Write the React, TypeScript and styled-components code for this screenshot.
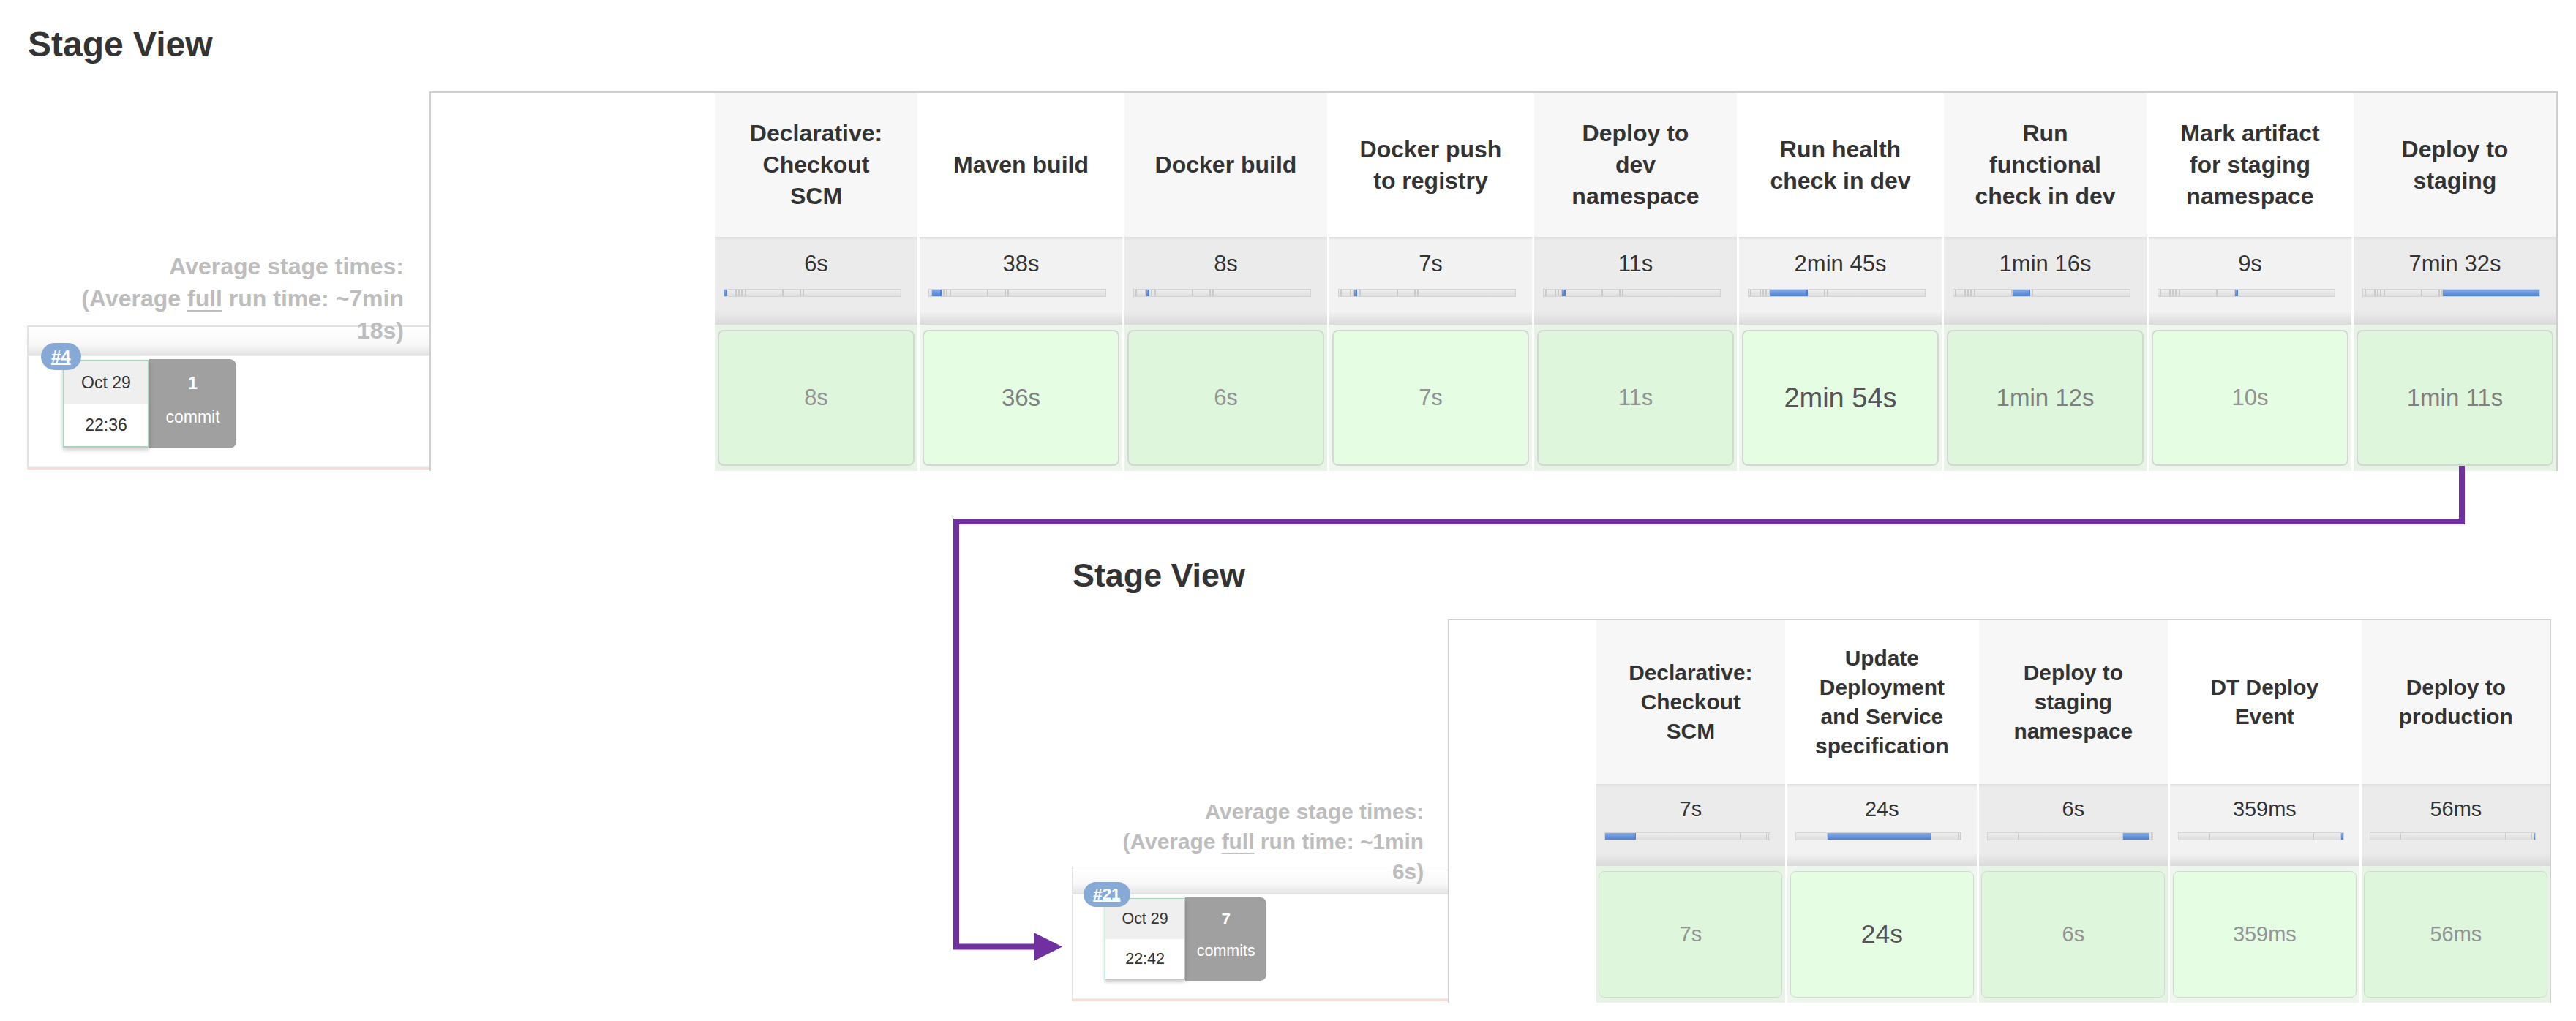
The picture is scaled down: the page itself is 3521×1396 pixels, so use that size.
import styled, { createGlobalStyle, css } from 'styled-components';

const GlobalStyle = createGlobalStyle`
    html, body {
        margin: 0;
        padding: 0;
        background: #fff;
    }
    body {
        font-family: 'Liberation Sans', Arial, Helvetica, sans-serif;
        color: #333;
    }
`;

type Tone = 'light' | 'mid' | 'strong';

interface IStage {
    name: string;
    avg: string;
    avgSec: number;
    run: string;
    tone: Tone;
}

interface IRun {
    id: number;
    date: string;
    time: string;
    commits: number;
    leadWidth: number;
    fullTime: string;
    stages: IStage[];
}

const firstRun: IRun = {
    id: 4,
    date: 'Oct 29',
    time: '22:36',
    commits: 1,
    leadWidth: 385,
    fullTime: '~7min 18s',
    stages: [
        { name: 'Declarative: Checkout SCM', avg: '6s', avgSec: 6, run: '8s', tone: 'light' },
        { name: 'Maven build', avg: '38s', avgSec: 38, run: '36s', tone: 'mid' },
        { name: 'Docker build', avg: '8s', avgSec: 8, run: '6s', tone: 'light' },
        { name: 'Docker push to registry', avg: '7s', avgSec: 7, run: '7s', tone: 'light' },
        { name: 'Deploy to dev namespace', avg: '11s', avgSec: 11, run: '11s', tone: 'light' },
        { name: 'Run health check in dev', avg: '2min 45s', avgSec: 165, run: '2min 54s', tone: 'strong' },
        { name: 'Run functional check in dev', avg: '1min 16s', avgSec: 76, run: '1min 12s', tone: 'mid' },
        { name: 'Mark artifact for staging namespace', avg: '9s', avgSec: 9, run: '10s', tone: 'light' },
        { name: 'Deploy to staging', avg: '7min 32s', avgSec: 452, run: '1min 11s', tone: 'mid' },
    ],
};

const secondRun: IRun = {
    id: 21,
    date: 'Oct 29',
    time: '22:42',
    commits: 7,
    leadWidth: 213,
    fullTime: '~1min 6s',
    stages: [
        { name: 'Declarative: Checkout SCM', avg: '7s', avgSec: 7, run: '7s', tone: 'light' },
        { name: 'Update Deployment and Service specification', avg: '24s', avgSec: 24, run: '24s', tone: 'strong' },
        { name: 'Deploy to staging namespace', avg: '6s', avgSec: 6, run: '6s', tone: 'light' },
        { name: 'DT Deploy Event', avg: '359ms', avgSec: 0.359, run: '359ms', tone: 'light' },
        { name: 'Deploy to production', avg: '56ms', avgSec: 0.056, run: '56ms', tone: 'light' },
    ],
};

const Page = styled.div`
    position: relative;
    width: 3521px;
    height: 1396px;
    overflow: hidden;
    padding-top: 33px;
    box-sizing: border-box;
`;

const Placement = styled.div<{ $left: number; $top: number }>`
    margin-left: ${(p) => p.$left}px;
    margin-top: ${(p) => p.$top}px;
    width: fit-content;
`;

const Zoomed = styled.div<{ $zoom: number }>`
    zoom: ${(p) => p.$zoom};
`;

const Title = styled.h2`
    margin: 0;
    font-size: 48px;
    line-height: 55px;
    font-weight: bold;
    color: #333;
`;

const Board = styled.div`
    display: flex;
    align-items: stretch;
    margin-top: 37px;
`;

const LeftColumn = styled.div`
    width: 549px;
    display: flex;
    flex-direction: column;
`;

const LeftHead = styled.div`
    flex: 1;
`;

const AvgLabelCell = styled.div`
    position: relative;
    z-index: 1;
    height: 120px;
    box-sizing: border-box;
    padding: 18px 35px 0 0;
    display: flex;
    justify-content: flex-end;
`;

const AvgLabel = styled.div`
    width: 480px;
    text-align: right;
    font-size: 32px;
    line-height: 44px;
    font-weight: bold;
    color: #bdbdbd;
`;

const Full = styled.span`
    text-decoration: underline;
    text-decoration-thickness: 2px;
    text-underline-offset: 5px;
`;

const RunCell = styled.div`
    height: 200px;
    padding-top: 1px;
    box-sizing: border-box;
`;

const RunBox = styled.div`
    height: 194px;
    box-sizing: border-box;
    margin-left: -1px;
    border-top: 2px solid #e3e3e3;
    border-left: 2px solid #e3e3e3;
    border-bottom: 2px solid #efefef;
    background: linear-gradient(
        to bottom,
        #fff 0,
        #f8f8f8 24px,
        #e4e4e4 38px,
        #dadada 39px,
        #fff 40px,
        #fff 100%
    );
    box-shadow: 0 3px 0 #f8dcd5;
    padding: 45px 0 0 47px;
    display: flex;
    align-items: flex-start;
`;

const DateBox = styled.div`
    position: relative;
    width: 118px;
    height: 120px;
    box-sizing: border-box;
    border: 2px solid #a9d3bd;
    box-shadow: 0 3px 6px rgba(0, 0, 0, 0.22);
    display: flex;
    flex-direction: column;
    background: #fff;
`;

const DateHalf = styled.div<{ $shade?: boolean }>`
    flex: 1;
    display: flex;
    align-items: center;
    justify-content: center;
    background: ${(p) => (p.$shade ? '#efefef' : '#fff')};
    font-size: 23px;
    color: #333;
`;

const Badge = styled.span`
    position: absolute;
    left: -32px;
    top: -25px;
    z-index: 2;
    height: 37px;
    line-height: 37px;
    padding: 0 14px;
    border-radius: 19px;
    background: #86aad5;
    color: #fff;
    font-size: 24px;
    font-weight: bold;
    text-decoration: underline;
    text-decoration-thickness: 2px;
`;

const Changes = styled.div`
    width: 119px;
    height: 122px;
    margin-top: -1px;
    box-sizing: border-box;
    padding-top: 10px;
    background: #a0a0a0;
    color: #fff;
    border-radius: 0 9px 9px 0;
    display: flex;
    flex-direction: column;
    align-items: center;
    font-size: 23px;
    line-height: 46px;
`;

const ChangeCount = styled.div`
    font-size: 24px;
    font-weight: bold;
`;

const Table = styled.div<{ $lead: number; $cols: number }>`
    border: 2px solid #cfcfcf;
    border-bottom: none;
    background: #fff;
    display: grid;
    grid-template-columns: ${(p) => p.$lead}px repeat(${(p) => p.$cols}, 277px);
    grid-template-rows: auto 120px 200px;
    column-gap: 3px;
`;

const LeadCell = styled.div`
    background: #fff;
`;

const HeadCell = styled.div<{ $odd: boolean }>`
    background: ${(p) => (p.$odd ? '#f7f7f7' : '#fff')};
    padding: 34px 38px;
    display: flex;
    align-items: center;
    justify-content: center;
    text-align: center;
    font-size: 32px;
    line-height: 43px;
    font-weight: bold;
    color: #333;
`;

const AvgCell = styled.div<{ $odd: boolean }>`
    ${(p) => {
        const base = p.$odd ? '#ebebeb' : '#f2f2f2';
        return css`
            background: linear-gradient(
                to bottom,
                #dedede 0,
                ${base} 5px,
                ${base} calc(100% - 18px),
                #dadada 100%
            );
        `;
    }}
    padding-top: 19px;
    box-sizing: border-box;
    display: flex;
    flex-direction: column;
    align-items: flex-start;
`;

const AvgValue = styled.div`
    align-self: stretch;
    text-align: center;
    font-size: 31px;
    line-height: 36px;
    color: #333;
    text-shadow: 0 1px 0 #fff;
`;

const Bar = styled.div`
    margin: 16px 0 0 12px;
    width: 243px;
    height: 11px;
    box-sizing: border-box;
    border: 1px solid #d3d3d3;
    background: linear-gradient(to bottom, #eeeeee, #dedede);
    display: flex;
    overflow: hidden;
`;

const Segment = styled.div<{ $active: boolean }>`
    height: 100%;
    flex-basis: 0;
    box-sizing: border-box;
    border-right: 2px solid #cbcbcb;
    &:last-child {
        border-right: none;
    }
    ${(p) =>
        p.$active &&
        css`
            background: linear-gradient(to bottom, #86abe6, #4c81d2);
            border-right-color: #4c81d2;
        `}
`;

const StageCell = styled.div<{ $odd: boolean }>`
    background: ${(p) => (p.$odd ? '#e7f4e5' : '#eef6ed')};
    padding: 7px 4px;
    box-sizing: border-box;
    display: flex;
`;

const toneStyle = {
    light: css`
        font-size: 31px;
        color: #949494;
    `,
    mid: css`
        font-size: 33px;
        color: #808080;
    `,
    strong: css`
        font-size: 38px;
        color: #555;
    `,
};

const StageBox = styled.div<{ $odd: boolean; $tone: Tone }>`
    flex: 1;
    border: 2px solid #d3d9d1;
    border-radius: 8px;
    background: ${(p) => (p.$odd ? '#ddf6dc' : '#e4fde3')};
    display: flex;
    align-items: center;
    justify-content: center;
    ${(p) => toneStyle[p.$tone]}
`;

const Connector = styled.svg`
    position: absolute;
    left: 0;
    top: 0;
    pointer-events: none;
`;

function StageView({ run }: { run: IRun }) {
    const total = run.stages.reduce((sum, s) => sum + s.avgSec, 0);
    return (
        <div>
            <Title>Stage View</Title>
            <Board>
                <LeftColumn>
                    <LeftHead />
                    <AvgLabelCell>
                        <AvgLabel>
                            Average stage times:
                            <br />
                            (Average <Full>full</Full> run time: {run.fullTime})
                        </AvgLabel>
                    </AvgLabelCell>
                    <RunCell>
                        <RunBox>
                            <DateBox>
                                <Badge>#{run.id}</Badge>
                                <DateHalf $shade>{run.date}</DateHalf>
                                <DateHalf>{run.time}</DateHalf>
                            </DateBox>
                            <Changes>
                                <ChangeCount>{run.commits}</ChangeCount>
                                <div>{run.commits === 1 ? 'commit' : 'commits'}</div>
                            </Changes>
                        </RunBox>
                    </RunCell>
                </LeftColumn>
                <Table $lead={run.leadWidth} $cols={run.stages.length}>
                    <LeadCell />
                    {run.stages.map((s, i) => (
                        <HeadCell key={s.name} $odd={i % 2 === 0}>
                            {s.name}
                        </HeadCell>
                    ))}
                    <LeadCell />
                    {run.stages.map((s, i) => (
                        <AvgCell key={s.name} $odd={i % 2 === 0}>
                            <AvgValue>{s.avg}</AvgValue>
                            <Bar>
                                {run.stages.map((seg, j) => (
                                    <Segment
                                        key={seg.name}
                                        $active={i === j}
                                        style={{ flexGrow: seg.avgSec / total }}
                                    />
                                ))}
                            </Bar>
                        </AvgCell>
                    ))}
                    <LeadCell />
                    {run.stages.map((s, i) => (
                        <StageCell key={s.name} $odd={i % 2 === 0}>
                            <StageBox $odd={i % 2 === 0} $tone={s.tone}>
                                {s.run}
                            </StageBox>
                        </StageCell>
                    ))}
                </Table>
            </Board>
        </div>
    );
}

function App() {
    return (
        <>
            <GlobalStyle />
            <Page>
                <Placement $left={38} $top={0}>
                    <StageView run={firstRun} />
                </Placement>
                <Placement $left={1466} $top={117}>
                    <Zoomed $zoom={0.934}>
                        <StageView run={secondRun} />
                    </Zoomed>
                </Placement>
                <Connector width="3521" height="1396" viewBox="0 0 3521 1396">
                    <polyline
                        points="3365,637 3365,713 1307,713 1307,1294.5 1416,1294.5"
                        fill="none"
                        stroke="#7030a0"
                        strokeWidth="8"
                        strokeLinejoin="miter"
                    />
                    <polygon points="1413,1275 1452,1294.5 1413,1314" fill="#7030a0" />
                </Connector>
            </Page>
        </>
    );
}

export default App;
